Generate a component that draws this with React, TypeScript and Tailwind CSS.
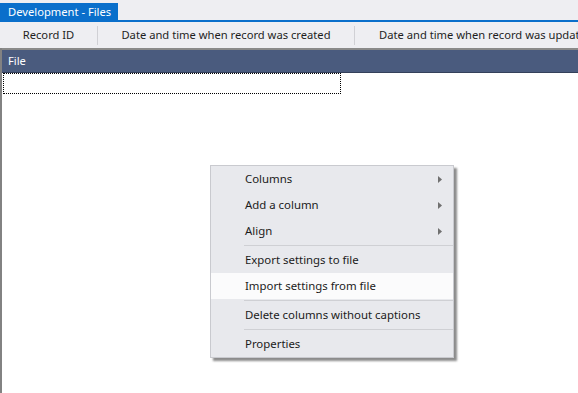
import React from "react";

const font = { fontFamily: '"Noto Sans", "Open Sans", sans-serif' };

function Arrow() {
  return (
    <svg width="4" height="7" viewBox="0 0 4 7" className="absolute right-[11px] top-[10px]">
      <path d="M0 0 L4 3.5 L0 7 Z" fill="#707070" />
    </svg>
  );
}

function Item({ label, arrow, active }: { label: string; arrow?: boolean; active?: boolean }) {
  return (
    <div className={`relative h-[26px] flex items-center pl-[34px] text-[11.4px] text-[#1b1b1b] whitespace-nowrap ${active ? "bg-[#fbfbfc]" : ""}`}>
      {label}
      {arrow && <Arrow />}
    </div>
  );
}

function Sep() {
  return (
    <div className="h-[3px] pl-[33px] flex items-center">
      <div className="h-px w-full bg-[#cfd0d4]" />
    </div>
  );
}

export default function App() {
  return (
    <div className="w-[578px] h-[393px] bg-white relative overflow-hidden" style={font}>
      <div className="h-[22px] bg-[#eeeef2] flex items-end border-b-2 border-[#0a6fcb]">
        <div className="shrink-0 h-[17px] w-[118px] bg-[#0a6fcb] text-white text-[11.2px] leading-[17px] pl-[8px] whitespace-nowrap">
          Development - Files
        </div>
      </div>
      <div className="h-[26px] bg-[#eeeef2] flex items-center text-[11.2px] text-[#1e1e1e] whitespace-nowrap overflow-hidden">
        <div className="shrink-0 w-[97px] text-center">Record ID</div>
        <div className="shrink-0 w-px h-[19px] bg-[#d0d0d5]" />
        <div className="shrink-0 w-[256px] text-center">Date and time when record was created</div>
        <div className="shrink-0 w-px h-[19px] bg-[#d0d0d5]" />
        <div className="shrink-0 pl-[24px]">Date and time when record was updated</div>
      </div>
      <div className="border-l-2 border-[#828282] h-[346px] flex flex-col">
        <div className="border-t-2 border-[#8a8a8a] h-[25px] bg-[#4a5b7e] text-white text-[11.2px] flex items-center pl-[6px] border-b border-b-[#34405a]">
          File
        </div>
        <div className="ml-[1px] w-[338px] h-[21px] border border-dotted border-black" />
      </div>

      <div className="absolute left-[210px] top-[165px] w-[244px] bg-[#e8e9ed] border border-[#c9cacf] shadow-[3px_3px_2px_rgba(0,0,0,0.45)]">
        <Item label="Columns" arrow />
        <Item label="Add a column" arrow />
        <Item label="Align" arrow />
        <Sep />
        <Item label="Export settings to file" />
        <Item label="Import settings from file" active />
        <Sep />
        <Item label="Delete columns without captions" />
        <Sep />
        <Item label="Properties" />
      </div>
    </div>
  );
}
